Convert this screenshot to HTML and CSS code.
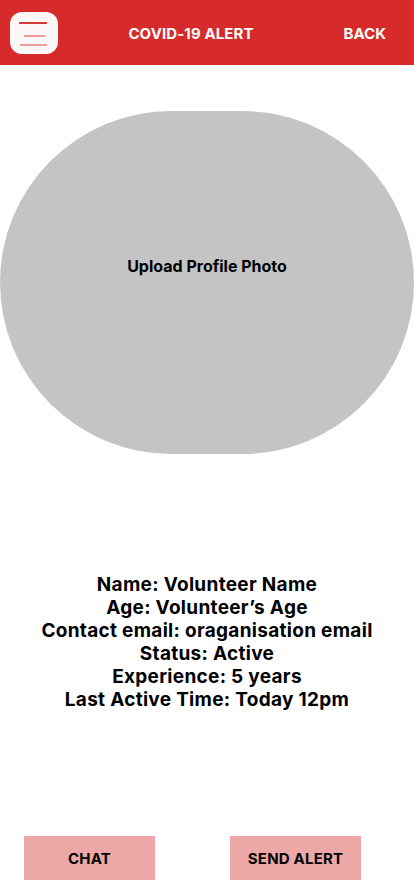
FILE: index.html
```html
<!DOCTYPE html>
<html lang="en">
<head>
<meta charset="utf-8">
<title>COVID-19 Alert</title>
<link rel="stylesheet" href="styles.css">
</head>
<body>
<header class="topbar">
  <div class="menu-btn">
    <span class="line line-1"></span>
    <span class="line line-2"></span>
    <span class="line line-3"></span>
  </div>
  <div class="title">COVID-19 ALERT</div>
  <div class="back">BACK</div>
</header>
<main class="content">
  <div class="photo">Upload Profile Photo</div>
  <div class="info">
    <p>Name: Volunteer Name</p>
    <p>Age: Volunteer’s Age</p>
    <p>Contact email: oraganisation email</p>
    <p>Status: Active</p>
    <p>Experience: 5 years</p>
    <p>Last Active Time: Today 12pm</p>
  </div>
  <div class="actions">
    <button class="btn">CHAT</button>
    <button class="btn">SEND ALERT</button>
  </div>
</main>
</body>
</html>
```
FILE: styles.css
```css
* { box-sizing: border-box; }
html, body { margin: 0; padding: 0; background: #fff; }
body {
  width: 414px;
  height: 896px;
  font-family: Inter, "Liberation Sans", sans-serif;
  color: #000;
  overflow: hidden;
}
.topbar {
  height: 65px;
  background: #d72b2b;
  display: grid;
  grid-template-columns: 1fr auto 1fr;
  align-items: center;
  padding: 0 28px 0 10px;
}
.menu-btn {
  width: 48px;
  height: 42px;
  background: #fdf8f8;
  border-radius: 12px;
  position: relative;
  justify-self: start;
}
.line {
  position: absolute;
  height: 2px;
}
.line-1 { top: 10px; left: 9px; width: 28px; background: #d53a3a; }
.line-2 { top: 23px; left: 14px; width: 21px; background: #ec9c9c; }
.line-3 { top: 32px; left: 10px; width: 27px; background: #ec9c9c; }
.title {
  color: #fff;
  font-weight: 700;
  font-size: 15px;
  letter-spacing: 0.1px;
  padding-right: 14px;
  padding-top: 2px;
}
.back {
  color: #fff;
  font-weight: 700;
  font-size: 15px;
  justify-self: end;
  padding-top: 2px;
}
.content {
  display: flex;
  flex-direction: column;
  align-items: center;
}
.photo {
  margin-top: 46px;
  width: 414px;
  height: 343px;
  background: #c4c4c4;
  border-radius: 200px;
  display: flex;
  align-items: center;
  justify-content: center;
  font-weight: 700;
  font-size: 16px;
  padding-bottom: 34px;
}
.info {
  margin-top: 119px;
  text-align: center;
  font-weight: 700;
  font-size: 19px;
  line-height: 23px;
  letter-spacing: 0.3px;
}
.info p { margin: 0; }
.actions {
  margin-top: 125px;
  width: 100%;
  display: flex;
  gap: 75px;
  padding-left: 24px;
}
.btn {
  width: 131px;
  height: 44px;
  border: 0;
  background: #eda7a7;
  font-family: Inter, "Liberation Sans", sans-serif;
  font-weight: 700;
  font-size: 15px;
  letter-spacing: 0.2px;
  color: #000;
  padding: 0;
}
```
